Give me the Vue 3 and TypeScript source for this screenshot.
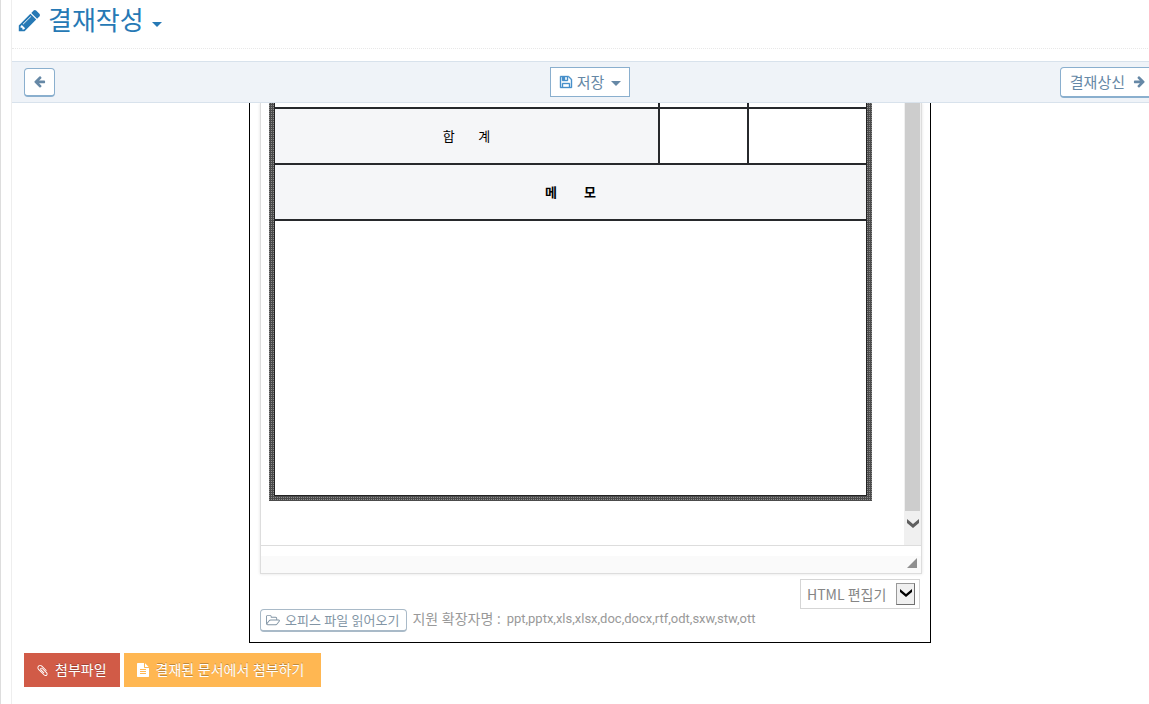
<script setup lang="ts">
import { ref } from 'vue'

const editorMode = ref('html')
const extensions: string[] = ['ppt', 'pptx', 'xls', 'xlsx', 'doc', 'docx', 'rtf', 'odt', 'sxw', 'stw', 'ott']
</script>

<template>
  <div class="page">
    <main class="content">
      <header class="page-header">
        <h1>
          <button type="button" class="title-button">
            <svg class="icon-title" viewBox="0 0 1792 1792" aria-hidden="true">
              <path d="M491 1536l91-91-235-235-91 91v107h128v128h107zm523-928q0-22-22-22-10 0-17 7l-542 542q-7 7-7 17 0 22 22 22 10 0 17-7l542-542q7-7 7-17zm-54-192l416 416-832 832h-416v-416zm683 96q0 53-37 90l-166 166-416-416 166-165q36-38 90-38 53 0 91 38l235 234q37 39 37 91z" />
            </svg>
            <span>결재작성</span>
            <i class="caret"></i>
          </button>
        </h1>
      </header>

      <div class="toolbar">
        <div>
          <button type="button" class="btn btn-back" aria-label="뒤로">
            <svg class="icon-arrow" viewBox="0 0 1792 1792" aria-hidden="true">
              <path d="M1664 896v128q0 53-32.5 90.5t-84.5 37.5h-704l293 294q38 36 38 90t-38 90l-75 76q-37 37-90 37-52 0-91-37l-651-652q-37-37-37-90 0-52 37-91l651-650q38-38 91-38 52 0 90 38l75 74q38 38 38 91t-38 91l-293 293h704q52 0 84.5 37.5t32.5 90.5z" />
            </svg>
          </button>
        </div>
        <button type="button" class="btn btn-save">
          <svg class="icon-save" viewBox="0 0 1792 1792" aria-hidden="true">
            <path d="M512 1536h768v-384h-768v384zm896 0h128v-896q0-14-10-38.5t-20-34.5l-281-281q-10-10-34-20t-39-10v416q0 40-28 68t-68 28h-576q-40 0-68-28t-28-68v-416h-128v1280h128v-416q0-40 28-68t68-28h832q40 0 68 28t28 68v416zm-384-928v-320q0-13-9.5-22.5t-22.5-9.5h-192q-13 0-22.5 9.5t-9.5 22.5v320q0 13 9.5 22.5t22.5 9.5h192q13 0 22.5-9.5t9.5-22.5zm640 32v928q0 40-28 68t-68 28h-1344q-40 0-68-28t-28-68v-1344q0-40 28-68t68-28h928q40 0 88 20t76 48l280 280q28 28 48 76t20 88z" />
          </svg>
          <span>저장</span>
          <i class="caret"></i>
        </button>
        <div class="toolbar-end">
          <button type="button" class="btn btn-submit">
            <span>결재상신</span>
            <svg class="icon-arrow" viewBox="0 0 1792 1792" aria-hidden="true">
              <path d="M1600 960q0 54-37 91l-651 651q-39 37-91 37-51 0-90-37l-75-75q-38-38-38-91t38-91l293-293h-704q-52 0-84.5-37.5t-32.5-90.5v-128q0-53 32.5-90.5t84.5-37.5h704l-293-294q-38-36-38-90t38-90l75-75q38-38 90-38 53 0 91 38l651 651q37 35 37 90z" />
            </svg>
          </button>
        </div>
      </div>

      <section class="sheet">
        <div class="editor">
          <div class="editor-view">
            <div class="document">
              <div class="table-frame">
                <table>
                  <colgroup>
                    <col />
                    <col class="col-amount" />
                    <col class="col-note" />
                  </colgroup>
                  <tbody>
                    <tr class="row-cut">
                      <td></td>
                      <td></td>
                      <td></td>
                    </tr>
                    <tr class="row-total">
                      <th scope="row" class="total">합&nbsp;&nbsp;&nbsp;&nbsp;&nbsp;&nbsp;&nbsp;계</th>
                      <td></td>
                      <td></td>
                    </tr>
                    <tr class="row-memo-title">
                      <th colspan="3">메&nbsp;&nbsp;&nbsp;&nbsp;&nbsp;&nbsp;&nbsp;&nbsp;모</th>
                    </tr>
                    <tr class="row-memo">
                      <td colspan="3"></td>
                    </tr>
                  </tbody>
                </table>
              </div>
            </div>
            <div class="scrollbar">
              <div class="thumb"></div>
              <div class="scroll-down">
                <svg viewBox="0 0 12 9" aria-hidden="true"><path d="M0 0l6 5 6-5v4L6 9 0 4z" /></svg>
              </div>
            </div>
          </div>
          <div class="editor-status">
            <svg viewBox="0 0 10 10" aria-hidden="true"><path d="M10 0v10H0z" /></svg>
          </div>
        </div>

        <div class="mode-row">
          <div class="mode">
            <select v-model="editorMode" aria-label="편집기 종류">
              <option value="html">HTML 편집기</option>
            </select>
            <span class="mode-arrow">
              <svg viewBox="0 0 12 8" aria-hidden="true"><path d="M0 0l6 5 6-5v3L6 8 0 3z" /></svg>
            </span>
          </div>
        </div>

        <div class="import-row">
          <button type="button" class="btn-import">
            <svg viewBox="0 0 1920 1792" aria-hidden="true">
              <path d="M1781 931q0-35-53-35h-1088q-40 0-85.5 21.5t-71.5 52.5l-294 363q-18 24-18 40 0 35 53 35h1088q40 0 86-22t71-53l294-363q18-22 18-39zm-1141-163h768v-160q0-40-28-68t-68-28h-576q-40 0-68-28t-28-68v-64q0-40-28-68t-68-28h-320q-40 0-68 28t-28 68v853l256-315q44-53 116-87.5t140-34.5zm1269 163q0 62-46 120l-295 363q-43 53-116 87.5t-140 34.5h-1088q-92 0-158-66t-66-158v-960q0-92 66-158t158-66h320q92 0 158 66t66 158v32h544q92 0 158 66t66 158v160h192q54 0 99 24.5t67 70.5q15 32 15 68z" />
            </svg>
            <span>오피스 파일 읽어오기</span>
          </button>
          <span class="hint">
            <span>지원 확장자명 :</span>
            <span class="extensions">{{ extensions.join(',') }}</span>
          </span>
        </div>
      </section>

      <div class="attach-row">
        <button type="button" class="btn-attach danger">
          <svg class="icon-clip" viewBox="0 0 1792 1792" aria-hidden="true">
            <path d="M1596 1385q0 117-79 196t-196 79q-135 0-235-100l-777-776q-113-115-113-271 0-159 110-270t269-111q158 0 273 113l605 606q10 10 10 22 0 16-30.5 46.5t-46.5 30.5q-13 0-23-10l-606-607q-79-77-181-77-106 0-179 75t-73 181q0 105 76 181l776 777q63 63 145 63 64 0 106-42t42-106q0-82-63-145l-581-581q-26-24-60-24-29 0-48 19t-19 48q0 32 25 59l410 410q10 10 10 22 0 16-31 47t-47 31q-12 0-22-10l-410-410q-63-61-63-149 0-82 57-139t139-57q88 0 149 63l581 581q100 98 100 235z" />
          </svg>
          <span>첨부파일</span>
        </button>
        <button type="button" class="btn-attach warning">
          <svg viewBox="0 0 1792 1792" aria-hidden="true">
            <path d="M1596 476q14 14 28 36h-472v-472q22 14 36 28zm-476 164h544v1056q0 40-28 68t-68 28h-1344q-40 0-68-28t-28-68v-1600q0-40 28-68t68-28h800v544q0 40 28 68t68 28zm160 736v-64q0-14-9-23t-23-9h-704q-14 0-23 9t-9 23v64q0 14 9 23t23 9h704q14 0 23-9t9-23zm0-256v-64q0-14-9-23t-23-9h-704q-14 0-23 9t-9 23v64q0 14 9 23t23 9h704q14 0 23-9t9-23zm0-256v-64q0-14-9-23t-23-9h-704q-14 0-23 9t-9 23v64q0 14 9 23t23 9h704q14 0 23-9t9-23z" />
          </svg>
          <span>결재된 문서에서 첨부하기</span>
        </button>
      </div>
    </main>
  </div>
</template>

<style>
body {
  background: #fff;
}
</style>

<style scoped>
* {
  box-sizing: border-box;
}

.page {
  min-height: 100vh;
  display: flex;
  padding-left: 10px;
  border-left: 1px solid #ddd;
  overflow: hidden;
  font-family: 'Open Sans', 'Noto Sans CJK KR', sans-serif;
  font-size: 14px;
  color: #393939;
}

button,
select {
  font-family: inherit;
  cursor: pointer;
}

svg {
  display: block;
  flex: none;
  fill: currentColor;
}

/* The work area is slightly wider than the window and is cut at its right edge. */
.content {
  flex: 1;
  margin-right: -19px;
  border-left: 1px solid #eee;
}

.page-header {
  height: 49px;
  border-bottom: 1px dotted #e8e8e8;
}

h1 {
  margin: 0;
  font-size: 26px;
  font-weight: 400;
}

.title-button {
  display: flex;
  align-items: center;
  height: 40px;
  padding: 0 0 0 5px;
  border: 0;
  background: none;
  font-size: 26px;
  font-weight: inherit;
  line-height: 40px;
  color: #2679b5;
}

.icon-title {
  width: 25px;
  height: 25px;
  margin-right: 6px;
}

.caret {
  border: 5px solid transparent;
  border-top-color: currentColor;
  border-bottom: 0;
}

.title-button .caret {
  margin: 8px 0 0 8px;
}

.toolbar {
  display: grid;
  grid-template-columns: 1fr auto 1fr;
  align-items: center;
  height: 42px;
  margin-top: 12px;
  padding: 0 12px;
  border: 1px solid #d8e2ec;
  border-width: 1px 0;
  background: #eff3f8;
}

.toolbar-end {
  display: flex;
  justify-content: flex-end;
}

.btn {
  display: flex;
  align-items: center;
  border: 1px solid #8aafce;
  background: #fff;
  color: #6688a6;
  font-size: 15px;
  line-height: 20px;
}

.btn-back,
.btn-submit {
  border-bottom-width: 2px;
  border-radius: 4px;
}

.btn-back {
  height: 29px;
  padding: 0 8px;
}

.btn-submit {
  gap: 8px;
  height: 31px;
  padding: 0 9px;
}

.btn-save {
  height: 30px;
  padding: 0 8px;
}

.btn-save .caret {
  margin: 2px 0 0 7px;
}

.icon-arrow {
  width: 13px;
  height: 13px;
}

.icon-save {
  width: 14px;
  height: 14px;
  margin-right: 4px;
  color: #478fca;
  stroke: currentColor;
  stroke-width: 50;
}

.sheet {
  width: 682px;
  margin: 0 auto;
  padding: 0 8px 10px 10px;
  border: 1px solid #000;
  border-top: 0;
}

.editor {
  border: 1px solid #ddd;
  border-top: 0;
  box-shadow: 0 0 3px rgba(0, 0, 0, 0.12);
  clip-path: inset(0 -4px -4px -4px);
}

.editor-view {
  display: flex;
}

.document {
  flex: 1;
  padding: 0 32px 44px 8px;
}

.table-frame {
  padding: 0 5px 5px;
  background: repeating-conic-gradient(#4c4c4c 0 75%, #8c8c8c 0 100%) 0 0 / 2px 2px;
}

table {
  width: 100%;
  table-layout: fixed;
  border: 1px solid #222;
  border-top: 0;
  border-spacing: 0;
  background: #fff;
  font-size: 13px;
  line-height: 20px;
  color: #000;
}

.col-amount {
  width: 89px;
}

.col-note {
  width: 119px;
}

th,
td {
  padding: 0;
  border-top: 2px solid #27292c;
}

td + td,
th + td {
  border-left: 2px solid #27292c;
}

th {
  background: #f5f6f8;
}

.total {
  font-weight: 400;
}

.row-cut td {
  height: 4px;
  border-top: 0;
}

.row-total,
.row-memo-title {
  height: 56px;
}

.row-memo {
  height: 276px;
}

.scrollbar {
  display: flex;
  flex-direction: column;
  width: 17px;
  padding: 0 1px;
  background: #f0f0f0;
}

.thumb {
  flex: 1;
  background: #cdcdcd;
}

.scroll-down {
  display: flex;
  justify-content: center;
  height: 34px;
  padding-top: 8px;
  color: #606060;
}

.scroll-down svg {
  width: 12px;
  height: 9px;
}

.editor-status {
  display: flex;
  align-items: flex-end;
  justify-content: flex-end;
  height: 28px;
  padding: 0 4px 5px;
  border-top: 1px solid #ddd;
  background: linear-gradient(#fff 10px, #fafafa 10px);
  color: #909090;
}

.editor-status svg {
  width: 10px;
  height: 10px;
}

.mode-row {
  display: flex;
  justify-content: flex-end;
  padding: 5px 2px 0 0;
}

.mode {
  position: relative;
}

select {
  display: block;
  width: 120px;
  height: 30px;
  padding: 0 28px 0 6px;
  appearance: none;
  border: 1px solid #d5d5d5;
  border-radius: 0;
  background: #fff;
  color: #858585;
  font-family: 'Noto Sans CJK KR', sans-serif;
  font-size: 14px;
}

.mode-arrow {
  position: absolute;
  top: 4px;
  right: 5px;
  display: flex;
  justify-content: center;
  width: 19px;
  height: 22px;
  padding-top: 5px;
  border: 1px solid #707070;
  border-top-color: #999;
  border-left-color: #999;
  background: #f0f0f0;
  color: #000;
  pointer-events: none;
}

.mode-arrow svg {
  width: 12px;
  height: 8px;
}

.import-row {
  display: flex;
  align-items: flex-start;
  gap: 5px;
}

.btn-import {
  display: flex;
  align-items: center;
  gap: 5px;
  height: 23px;
  padding: 0 7px 0 5px;
  border: 1px solid #a9bac8;
  border-bottom-width: 2px;
  border-radius: 4px;
  background: #fff;
  color: #8295a5;
  font-size: 13px;
  line-height: 18px;
}

.btn-import svg {
  width: 14px;
  height: 13px;
}

.hint {
  display: flex;
  gap: 6px;
  font-size: 14px;
  line-height: 20px;
  color: #999;
  white-space: nowrap;
}

.extensions {
  font-family: Roboto, sans-serif;
  font-size: 13px;
}

.attach-row {
  display: flex;
  gap: 4px;
  padding: 10px 12px 0;
}

.btn-attach {
  display: flex;
  align-items: center;
  gap: 6px;
  height: 34px;
  padding: 0 13px 0 12px;
  border: 0;
  color: #fff;
  font-size: 14px;
  line-height: 20px;
  text-shadow: 0 -1px 0 rgba(0, 0, 0, 0.25);
}

.btn-attach svg {
  width: 14px;
  height: 14px;
}

.btn-attach .icon-clip {
  width: 13px;
  height: 13px;
}

.danger {
  background: #d15b47;
}

.warning {
  padding-right: 17px;
  background: #ffb752;
}
</style>
